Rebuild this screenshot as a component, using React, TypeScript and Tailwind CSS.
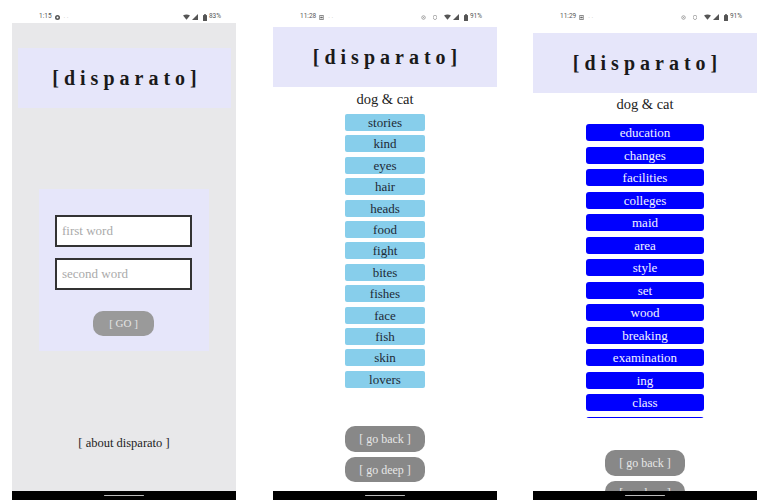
import React from "react";

const serif = "font-['Liberation_Serif',serif]";

function Wifi() {
  return (
    <svg width="7" height="6" viewBox="0 0 10 8">
      <path d="M0 2 Q5 -1.5 10 2 L5 8 Z" fill="#555" />
    </svg>
  );
}
function Signal() {
  return (
    <svg width="6" height="6" viewBox="0 0 8 8">
      <path d="M8 0 L8 8 L0 8 Z" fill="#555" />
    </svg>
  );
}
function Battery() {
  return (
    <svg width="4" height="7" viewBox="0 0 4 7">
      <rect x="1.2" y="0" width="1.6" height="1" fill="#555" />
      <rect x="0" y="1" width="4" height="6" rx="0.5" fill="#555" />
    </svg>
  );
}
function Dot() {
  return (
    <svg width="5" height="5" viewBox="0 0 10 10">
      <circle cx="5" cy="5" r="3.5" fill="none" stroke="#888" strokeWidth="1.5" />
      <circle cx="5" cy="5" r="1" fill="#888" />
    </svg>
  );
}
function Shield() {
  return (
    <svg width="4" height="5" viewBox="0 0 8 10">
      <path d="M4 0.5 L7.5 2 L7.5 5 Q7.5 8.5 4 9.5 Q0.5 8.5 0.5 5 L0.5 2 Z" fill="none" stroke="#888" strokeWidth="1.3" />
    </svg>
  );
}

function StatusBar({ time, pct, extra, icon }: { time: string; pct: string; extra: boolean; icon: "circle" | "msg" | "img" }) {
  return (
    <div className="h-[23px] pt-[11px] flex items-center bg-white pl-[27px] pr-[15px] font-['Roboto',sans-serif] text-[6.5px] text-[#555] shrink-0">
      <span>{time}</span>
      <span className="ml-[3px] flex items-center">
        {icon === "circle" ? (
          <svg width="5" height="5" viewBox="0 0 10 10">
            <circle cx="5" cy="5" r="5" fill="#555" />
            <circle cx="5" cy="5" r="2" fill="#fff" />
          </svg>
        ) : (
          <svg width="5" height="5" viewBox="0 0 10 10">
            <rect x="0.5" y="1" width="9" height="8" rx="1" fill="none" stroke="#666" strokeWidth="1.5" />
            <rect x="2.5" y="3.5" width="5" height="3" fill="#666" />
          </svg>
        )}
      </span>
      <span className="ml-[4px] text-[#ccc]">. .</span>
      <div className="ml-auto flex items-center gap-[2px]">
        {extra && (
          <>
            <Dot />
            <span className="w-[3px]" />
            <Shield />
            <span className="w-[3px]" />
          </>
        )}
        <Wifi />
        <Signal />
        <span className="w-[1px]" />
        <Battery />
        <span>{pct}</span>
      </div>
    </div>
  );
}

function NavBar() {
  return (
    <div className="h-[9px] bg-black flex items-center justify-center shrink-0">
      <div className="w-[40px] h-[1.5px] bg-[#bbb] rounded-full" />
    </div>
  );
}

function Title() {
  return (
    <div className={`${serif} text-[20px] font-bold tracking-[5px] pl-[5px] text-[#1a1a1a] leading-none`}>
      [disparato]
    </div>
  );
}

function Panel1() {
  return (
    <div className="w-[224px] h-[500px] flex flex-col shrink-0">
      <StatusBar time="1:15" pct="83%" extra={false} icon="circle" />
      <div className="flex-1 min-h-0 bg-[#e8e8ea] flex flex-col">
        <div className="mt-[25px] ml-[6px] mr-[5px] h-[60px] bg-[#e6e6fa] flex items-center justify-center">
          <Title />
        </div>
        <div className="mt-[81px] ml-[27px] w-[170px] h-[162px] bg-[#e6e6fa] flex flex-col pt-[26px] pl-[16px]">
          <input
            readOnly
            placeholder="first word"
            className={`${serif} w-[137px] h-[32px] border-2 border-[#333] bg-white px-[5px] text-[13px] placeholder:text-[#aaa] outline-none`}
          />
          <input
            readOnly
            placeholder="second word"
            className={`${serif} mt-[11px] w-[137px] h-[32px] border-2 border-[#333] bg-white px-[5px] text-[13px] placeholder:text-[#aaa] outline-none`}
          />
          <div className="mt-[21px] ml-[38px] w-[61px] h-[25px] rounded-[10px] bg-[#9a9a9a] flex items-center justify-center">
            <span className={`${serif} text-[11px] text-[#e4e4e4]`}>[ GO ]</span>
          </div>
        </div>
        <div className={`${serif} mt-[84px] h-[16px] leading-[16px] text-center text-[12.5px] text-[#222]`}>
          [ about disparato ]
        </div>
      </div>
      <NavBar />
    </div>
  );
}

const words2 = ["stories", "kind", "eyes", "hair", "heads", "food", "fight", "bites", "fishes", "face", "fish", "skin", "lovers"];
const words3 = ["education", "changes", "facilities", "colleges", "maid", "area", "style", "set", "wood", "breaking", "examination", "ing", "class"];

function GrayButton({ label }: { label: string }) {
  return (
    <div className="w-[80px] h-[25.5px] rounded-[10px] bg-[#888888] flex items-center justify-center shrink-0">
      <span className={`${serif} text-[12px] text-[#e6e6e6]`}>{label}</span>
    </div>
  );
}

function Panel2() {
  return (
    <div className="w-[224px] h-[500px] flex flex-col shrink-0 bg-white">
      <div className="flex-1 min-h-0 overflow-hidden flex flex-col">
        <StatusBar time="11:28" pct="91%" extra={true} icon="msg" />
        <div className="h-[4px] shrink-0" />
        <div className="h-[60px] bg-[#e6e6fa] flex items-center justify-center shrink-0">
          <Title />
        </div>
        <div className={`${serif} mt-[2px] h-[20px] leading-[20px] text-center text-[14.5px] text-[#222] shrink-0`}>dog &amp; cat</div>
        <div className="mt-[5px] self-center w-[80px] flex flex-col gap-[4.4px] shrink-0">
          {words2.map((w) => (
            <div key={w} className={`${serif} h-[17px] leading-[17px] rounded-[2px] bg-[#87ceeb] text-center text-[13px] text-[#1e2a36]`}>
              {w}
            </div>
          ))}
        </div>
        <div className="mt-[38.7px] flex flex-col items-center gap-[5px] shrink-0">
          <GrayButton label="[ go back ]" />
          <GrayButton label="[ go deep ]" />
        </div>
      </div>
      <NavBar />
    </div>
  );
}

function Panel3() {
  return (
    <div className="w-[224px] h-[500px] flex flex-col shrink-0 bg-white">
      <div className="flex-1 min-h-0 overflow-hidden flex flex-col">
        <StatusBar time="11:29" pct="91%" extra={true} icon="img" />
        <div className="h-[10px] shrink-0" />
        <div className="h-[60px] bg-[#e6e6fa] flex items-center justify-center shrink-0">
          <Title />
        </div>
        <div className={`${serif} mt-[1px] h-[20px] leading-[20px] text-center text-[14.5px] text-[#222] shrink-0`}>dog &amp; cat</div>
        <div className="mt-[10px] self-center w-[118px] h-[294px] overflow-hidden flex flex-col gap-[5.5px] shrink-0">
          {words3.map((w) => (
            <div key={w} className={`${serif} h-[17px] leading-[17px] shrink-0 rounded-[3px] bg-[#0000ff] text-center text-[13px] text-[#f4f4ff]`}>
              {w}
            </div>
          ))}
          <div className="h-[17px] shrink-0 rounded-[3px] bg-[#0000ff]" />
        </div>
        <div className="mt-[32px] flex flex-col items-center gap-[5px] shrink-0">
          <GrayButton label="[ go back ]" />
          <GrayButton label="[ go deep ]" />
        </div>
      </div>
      <NavBar />
    </div>
  );
}

export default function App() {
  return (
    <div className="w-[770px] h-[500px] bg-white flex pl-[12px] overflow-hidden">
      <Panel1 />
      <div className="ml-[37px]">
        <Panel2 />
      </div>
      <div className="ml-[36px]">
        <Panel3 />
      </div>
    </div>
  );
}
